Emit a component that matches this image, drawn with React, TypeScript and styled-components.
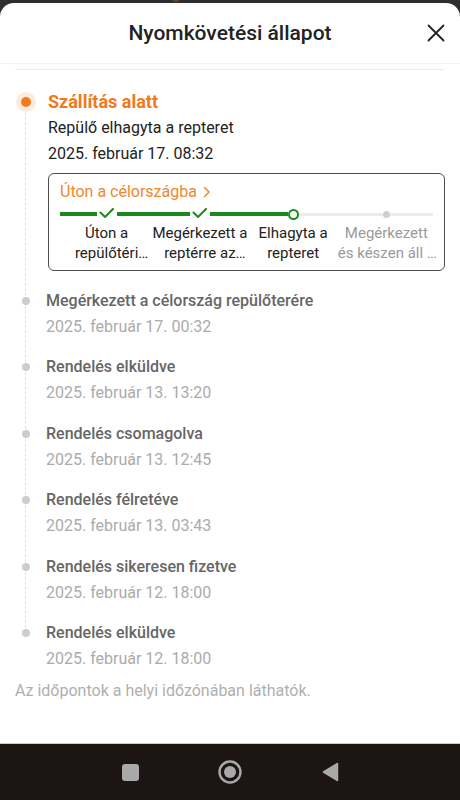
import React from "react";
import styled, { createGlobalStyle } from "styled-components";

const GlobalStyle = createGlobalStyle`
  html, body { margin: 0; padding: 0; }
  body { font-family: Roboto, "Noto Sans", Arial, sans-serif; background: #2e2e2e; }
  * { box-sizing: border-box; }
`;

const Page = styled.div`
  width: 460px;
  height: 800px;
  display: flex;
  flex-direction: column;
  background: #2e2e2e;
  overflow: hidden;
`;

const Peek = styled.div`
  height: 3px;
  overflow: hidden;
  padding-left: 60px;
`;

const PeekText = styled.div`
  margin-top: -15px;
  font-size: 16px;
  line-height: 18px;
  font-weight: 700;
  color: #6a4220;
`;

const Sheet = styled.div`
  flex: 1;
  background: #fff;
  border-radius: 14px 14px 0 0;
  display: flex;
  flex-direction: column;
`;

const Header = styled.header`
  height: 61px;
  display: grid;
  grid-template-columns: 44px 1fr 44px;
  align-items: center;
  padding: 0 2px;
  border-bottom: 1px solid #f3f3f3;
`;

const Title = styled.h1`
  grid-column: 2;
  margin: 0;
  text-align: center;
  font-size: 21px;
  font-weight: 500;
  color: #222;
`;

const CloseButton = styled.button`
  grid-column: 3;
  width: 44px;
  height: 44px;
  display: flex;
  align-items: center;
  justify-content: center;
  border: none;
  background: none;
  padding: 0;
  color: #222;
`;

const Content = styled.div`
  padding: 5px 15px 0;
`;

const List = styled.div`
  border-top: 1px solid #ececec;
  padding-top: 19px;
`;

const Item = styled.div<{ $last?: boolean; $first?: boolean }>`
  position: relative;
  display: grid;
  grid-template-columns: 22px 1fr;
  column-gap: ${(p) => (p.$first ? "11px" : "9px")};
  padding-bottom: ${(p) => (p.$first ? "17px" : p.$last ? "8px" : "14.4px")};

  &::before {
    content: "";
    display: ${(p) => (p.$last ? "none" : "block")};
    position: absolute;
    left: 10px;
    top: 13px;
    bottom: -13px;
    border-left: 1px dashed #e0e0e0;
  }
`;

const Rail = styled.div`
  height: 26px;
  display: flex;
  align-items: center;
  justify-content: center;
  position: relative;
  z-index: 1;
`;

const Dot = styled.span<{ $active?: boolean }>`
  display: block;
  width: ${(p) => (p.$active ? "10px" : "8px")};
  height: ${(p) => (p.$active ? "10px" : "8px")};
  border-radius: 50%;
  background: ${(p) => (p.$active ? "#f07c1c" : "#cdcdcd")};
  box-shadow: ${(p) => (p.$active ? "0 0 0 5px #fdebdc" : "none")};
`;

const Body = styled.div`
  min-width: 0;
`;

const ItemTitle = styled.div<{ $active?: boolean }>`
  font-size: ${(p) => (p.$active ? "18px" : "16px")};
  line-height: 26px;
  font-weight: ${(p) => (p.$active ? 700 : 500)};
  color: ${(p) => (p.$active ? "#ef7a1d" : "#666")};
`;

const ItemLine = styled.div<{ $muted?: boolean }>`
  font-size: 16px;
  line-height: 26px;
  color: ${(p) => (p.$muted ? "#ababab" : "#222")};
`;

const Card = styled.div`
  margin-top: 6px;
  border: 1px solid #4d4d4d;
  border-radius: 6px;
  padding: 8px 11px 7px;
`;

const CardLink = styled.div`
  display: flex;
  align-items: center;
  gap: 6px;
  font-size: 16px;
  line-height: 20px;
  color: #ef8730;
`;

const Steps = styled.div`
  margin-top: 6px;
  display: grid;
  grid-template-columns: repeat(4, 1fr);
`;

const Step = styled.div`
  display: flex;
  flex-direction: column;
  min-width: 0;
`;

const Track = styled.div`
  height: 12px;
  display: flex;
  align-items: center;
`;

const Line = styled.span<{ $done?: boolean }>`
  flex: 1;
  height: ${(p) => (p.$done ? "4px" : "3px")};
  background: ${(p) => (p.$done ? "#1a8a1e" : "#ebebeb")};
`;

const CheckNode = styled.span`
  width: 20px;
  height: 12px;
  display: flex;
`;

const RingNode = styled.span`
  width: 11px;
  height: 11px;
  border-radius: 50%;
  border: 2px solid #1a8a1e;
  background: #fff;
`;

const PendingNode = styled.span`
  width: 7px;
  height: 7px;
  border-radius: 50%;
  background: #cfcfcf;
`;

const StepLabel = styled.div<{ $muted?: boolean }>`
  margin: 3px -4px 0;
  font-size: 15px;
  line-height: 20px;
  text-align: center;
  color: ${(p) => (p.$muted ? "#9a9a9a" : "#222")};
  display: -webkit-box;
  -webkit-line-clamp: 2;
  -webkit-box-orient: vertical;
  overflow: hidden;
`;

const Footer = styled.div`
  padding: 0 15px;
  font-size: 16px;
  line-height: 22px;
  color: #afafaf;
`;

const NavBar = styled.nav`
  height: 57px;
  background: #1d1414;
  border-top: 1px solid #c9c9c9;
  display: flex;
  align-items: center;
  justify-content: center;
  gap: 60px;
`;

const NavSlot = styled.div`
  width: 40px;
  height: 40px;
  display: flex;
  align-items: center;
  justify-content: center;
`;

const NavSquare = styled.span`
  width: 17px;
  height: 17px;
  border-radius: 3px;
  background: #a9a9a9;
`;

const Check = () => (
  <svg width="20" height="12" viewBox="0 0 20 12">
    <path d="M3.5 4.5 L8 9 L16 1" fill="none" stroke="#1a8a1e" strokeWidth="2" strokeLinecap="round" strokeLinejoin="round" />
  </svg>
);

type StepKind = "check" | "ring" | "pending";

const steps: { label: string; kind: StepKind; left: boolean; right: boolean }[] = [
  { label: "Úton a repülőtéri átrakodóközpontba", kind: "check", left: true, right: true },
  { label: "Megérkezett a reptérre az indulásra", kind: "check", left: true, right: true },
  { label: "Elhagyta a repteret", kind: "ring", left: true, right: false },
  { label: "Megérkezett és készen áll a vámkezelésre", kind: "pending", left: false, right: false },
];

const events = [
  { title: "Megérkezett a célország repülőterére", date: "2025. február 17. 00:32" },
  { title: "Rendelés elküldve", date: "2025. február 13. 13:20" },
  { title: "Rendelés csomagolva", date: "2025. február 13. 12:45" },
  { title: "Rendelés félretéve", date: "2025. február 13. 03:43" },
  { title: "Rendelés sikeresen fizetve", date: "2025. február 12. 18:00" },
  { title: "Rendelés elküldve", date: "2025. február 12. 18:00" },
];

export default function App() {
  return (
    <>
      <GlobalStyle />
      <Page>
        <Peek>
          <PeekText>Úton a célországba ›</PeekText>
        </Peek>
        <Sheet>
          <Header>
            <Title>Nyomkövetési állapot</Title>
            <CloseButton aria-label="Bezárás">
              <svg width="18" height="18" viewBox="0 0 18 18">
                <path d="M1.5 1.5 L16.5 16.5 M16.5 1.5 L1.5 16.5" stroke="#222" strokeWidth="1.8" strokeLinecap="round" />
              </svg>
            </CloseButton>
          </Header>
          <Content>
            <List>
              <Item $first>
                <Rail>
                  <Dot $active />
                </Rail>
                <Body>
                  <ItemTitle $active>Szállítás alatt</ItemTitle>
                  <ItemLine>Repülő elhagyta a repteret</ItemLine>
                  <ItemLine>2025. február 17. 08:32</ItemLine>
                  <Card>
                    <CardLink>
                      Úton a célországba
                      <svg width="8" height="12" viewBox="0 0 8 12">
                        <path d="M1.5 1.5 L6 6 L1.5 10.5" fill="none" stroke="#ef8730" strokeWidth="1.5" strokeLinecap="round" strokeLinejoin="round" />
                      </svg>
                    </CardLink>
                    <Steps>
                      {steps.map((s, i) => (
                        <Step key={i}>
                          <Track>
                            <Line $done={s.left} />
                            {s.kind === "check" && (
                              <CheckNode>
                                <Check />
                              </CheckNode>
                            )}
                            {s.kind === "ring" && <RingNode />}
                            {s.kind === "pending" && <PendingNode />}
                            <Line $done={s.right} />
                          </Track>
                          <StepLabel $muted={s.kind === "pending"}>{s.label}</StepLabel>
                        </Step>
                      ))}
                    </Steps>
                  </Card>
                </Body>
              </Item>
              {events.map((e, i) => (
                <Item key={i} $last={i === events.length - 1}>
                  <Rail>
                    <Dot />
                  </Rail>
                  <Body>
                    <ItemTitle>{e.title}</ItemTitle>
                    <ItemLine $muted>{e.date}</ItemLine>
                  </Body>
                </Item>
              ))}
            </List>
          </Content>
          <Footer>Az időpontok a helyi időzónában láthatók.</Footer>
        </Sheet>
        <NavBar>
          <NavSlot>
            <NavSquare />
          </NavSlot>
          <NavSlot>
            <svg width="24" height="24" viewBox="0 0 24 24">
              <circle cx="12" cy="12" r="10.5" fill="none" stroke="#a9a9a9" strokeWidth="2.4" />
              <circle cx="12" cy="12" r="6" fill="#a9a9a9" />
            </svg>
          </NavSlot>
          <NavSlot>
            <svg width="17" height="20" viewBox="0 0 17 20">
              <path d="M15.5 1.5 L15.5 18.5 L1.5 10 Z" fill="#a9a9a9" stroke="#a9a9a9" strokeWidth="1.5" strokeLinejoin="round" />
            </svg>
          </NavSlot>
        </NavBar>
      </Page>
    </>
  );
}
